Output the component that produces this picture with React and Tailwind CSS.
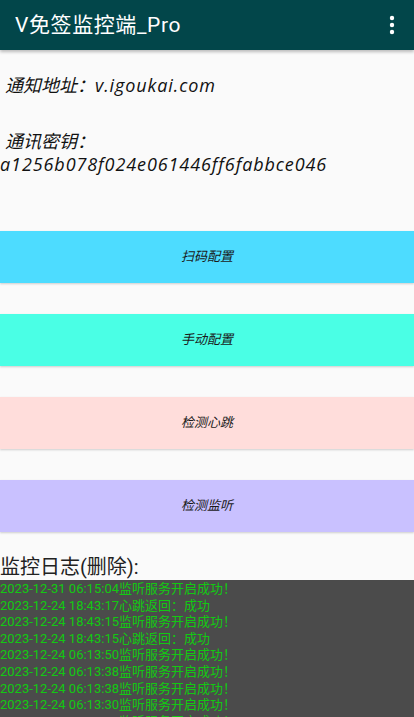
import React from 'react'

const FONT = { fontFamily: "Roboto, 'Noto Sans CJK SC', sans-serif" }
const INFO_FONT = { fontFamily: "'Open Sans', 'Noto Sans CJK SC', sans-serif" }

const BUTTONS = [
  { label: '扫码配置', cls: 'bg-[#4ddcff]' },
  { label: '手动配置', cls: 'bg-[#4affe5]' },
  { label: '检测心跳', cls: 'bg-[#ffdddb]' },
  { label: '检测监听', cls: 'bg-[#c9c1ff]' },
]

const LOGS = [
  '2023-12-31 06:15:04监听服务开启成功！',
  '2023-12-24 18:43:17心跳返回：成功',
  '2023-12-24 18:43:15监听服务开启成功！',
  '2023-12-24 18:43:15心跳返回：成功',
  '2023-12-24 06:13:50监听服务开启成功！',
  '2023-12-24 06:13:38监听服务开启成功！',
  '2023-12-24 06:13:38监听服务开启成功！',
  '2023-12-24 06:13:30监听服务开启成功！',
  '2023-12-24 06:13:12监听服务开启成功！',
]

export default function App() {
  return (
    <div className="flex h-[717px] w-[414px] flex-col overflow-hidden bg-[#fafafa]" style={FONT}>
      <header className="relative z-10 flex h-[50px] shrink-0 items-center justify-between bg-[#02464a] pl-[15px] pr-[14px] shadow-[0_2px_3px_rgba(0,0,0,0.25)]">
        <h1 className="text-[21px] font-normal leading-none tracking-[0.6px] text-white">V免签监控端_Pro</h1>
        <svg width="6" height="20" viewBox="0 0 6 20" className="mr-[5px]">
          <circle cx="3" cy="3" r="2.2" fill="#fff" />
          <circle cx="3" cy="10" r="2.2" fill="#fff" />
          <circle cx="3" cy="17" r="2.2" fill="#fff" />
        </svg>
      </header>

      <div className="mt-[23px] text-[18px] italic text-[#111]" style={INFO_FONT}>
        <p className="pl-[5px] leading-[24px]">
          通知地址：<span className="tracking-[0.9px]">v.igoukai.com</span>
        </p>
        <p className="mt-[33px] pl-[5px] leading-[23px]">通讯密钥：</p>
        <p className="leading-[23px] tracking-[0.9px]">a1256b078f024e061446ff6fabbce046</p>
      </div>

      <div className="mt-[55px] flex flex-col gap-[31px]">
        {BUTTONS.map((b) => (
          <button
            key={b.label}
            className={`flex h-[52px] w-full items-center justify-center text-[13px] italic text-[#1a1a1a] shadow-[0_1px_2px_rgba(0,0,0,0.18)] ${b.cls}`}
          >
            {b.label}
          </button>
        ))}
      </div>

      <p className="mt-[22px] text-[20px] leading-[26px] text-[#222]">监控日志(删除):</p>

      <div className="flex-1 bg-[#4b4b4b] pt-[1px]">
        {LOGS.map((line, i) => (
          <p key={i} className="whitespace-nowrap text-[13px] leading-[16.6px] text-[#12c912]">
            {line}
          </p>
        ))}
      </div>
    </div>
  )
}
